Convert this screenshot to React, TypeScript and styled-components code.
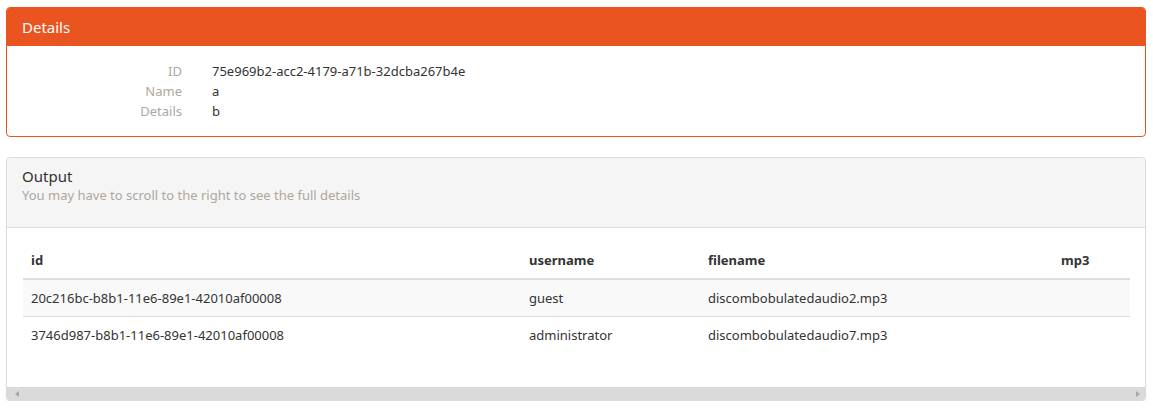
import React from "react";
import styled, { createGlobalStyle } from "styled-components";

const Global = createGlobalStyle`
  html, body { margin: 0; padding: 0; background: #fff; }
  body { font-family: "Noto Sans", "Open Sans", sans-serif; font-size: 13px; color: #333; }
  * { box-sizing: border-box; }
`;

const Page = styled.div`
  padding: 7px 7px 0 6px;
  display: flex;
  flex-direction: column;
  gap: 20px;
`;

const Panel = styled.section<{ $accent?: boolean }>`
  border: 1px solid ${(p) => (p.$accent ? "#e95420" : "#dcdcdc")};
  border-radius: 4px;
  background: #fff;
  overflow: hidden;
  box-shadow: ${(p) => (p.$accent ? "none" : "0 1px 2px rgba(0,0,0,0.08)")};
`;

const AccentHeading = styled.header`
  background: #e95420;
  color: #fff;
  height: 38px;
  padding: 0 15px;
  display: flex;
  align-items: center;
  font-size: 15px;
`;

const Body = styled.div`
  padding: 15px;
`;

const DefList = styled.dl`
  margin: 0;
  display: grid;
  grid-template-columns: 160px 1fr;
  column-gap: 30px;
  line-height: 20px;
`;

const Term = styled.dt`
  text-align: right;
  color: #aea79f;
`;

const Desc = styled.dd`
  margin: 0;
  color: #333;
`;

const PlainHeading = styled.header`
  background: #f5f5f5;
  border-bottom: 1px solid #dcdcdc;
  height: 70px;
  padding: 8px 15px 0;
`;

const HeadingTitle = styled.div`
  font-size: 15px;
  line-height: 20px;
  color: #333;
`;

const HeadingSub = styled.div`
  font-size: 13px;
  line-height: 18px;
  color: #aea79f;
`;

const TableWrap = styled.div`
  padding: 14px 15px 34px 16px;
`;

const Table = styled.table`
  width: 100%;
  border-collapse: collapse;
  table-layout: fixed;
`;

const Th = styled.th<{ $w: number }>`
  width: ${(p) => p.$w}px;
  text-align: left;
  font-weight: bold;
  padding: 8px;
  line-height: 20px;
  border-bottom: 2px solid #dddddd;
`;

const Tr = styled.tr<{ $striped?: boolean }>`
  background: ${(p) => (p.$striped ? "#f9f9f9" : "#fff")};
`;

const Td = styled.td`
  padding: 8px;
  line-height: 20px;
  border-top: 1px solid #dddddd;
  white-space: nowrap;
`;

const Scrollbar = styled.div`
  height: 13px;
  background: #dadada;
  display: flex;
  align-items: center;
  justify-content: space-between;
  padding: 0 5px 0 8px;
`;

const Arrow = styled.span<{ $dir: "left" | "right" }>`
  width: 0;
  height: 0;
  border-top: 3.5px solid transparent;
  border-bottom: 3.5px solid transparent;
  ${(p) =>
    p.$dir === "left"
      ? "border-right: 4px solid #a8a8a8;"
      : "border-left: 4px solid #a8a8a8;"}
`;

const cols = [
  { key: "id", w: 498 },
  { key: "username", w: 179 },
  { key: "filename", w: 353 },
  { key: "mp3", w: 77 },
];

const rows = [
  { id: "20c216bc-b8b1-11e6-89e1-42010af00008", username: "guest", filename: "discombobulatedaudio2.mp3", mp3: "" },
  { id: "3746d987-b8b1-11e6-89e1-42010af00008", username: "administrator", filename: "discombobulatedaudio7.mp3", mp3: "" },
];

export default function App() {
  return (
    <>
      <Global />
      <Page>
        <Panel $accent>
          <AccentHeading>Details</AccentHeading>
          <Body>
            <DefList>
              <Term>ID</Term>
              <Desc>75e969b2-acc2-4179-a71b-32dcba267b4e</Desc>
              <Term>Name</Term>
              <Desc>a</Desc>
              <Term>Details</Term>
              <Desc>b</Desc>
            </DefList>
          </Body>
        </Panel>
        <Panel>
          <PlainHeading>
            <HeadingTitle>Output</HeadingTitle>
            <HeadingSub>You may have to scroll to the right to see the full details</HeadingSub>
          </PlainHeading>
          <TableWrap>
            <Table>
              <thead>
                <tr>
                  {cols.map((c) => (
                    <Th key={c.key} $w={c.w}>{c.key}</Th>
                  ))}
                </tr>
              </thead>
              <tbody>
                {rows.map((r, i) => (
                  <Tr key={r.id} $striped={i % 2 === 0}>
                    <Td>{r.id}</Td>
                    <Td>{r.username}</Td>
                    <Td>{r.filename}</Td>
                    <Td>{r.mp3}</Td>
                  </Tr>
                ))}
              </tbody>
            </Table>
          </TableWrap>
          <Scrollbar>
            <Arrow $dir="left" />
            <Arrow $dir="right" />
          </Scrollbar>
        </Panel>
      </Page>
    </>
  );
}
